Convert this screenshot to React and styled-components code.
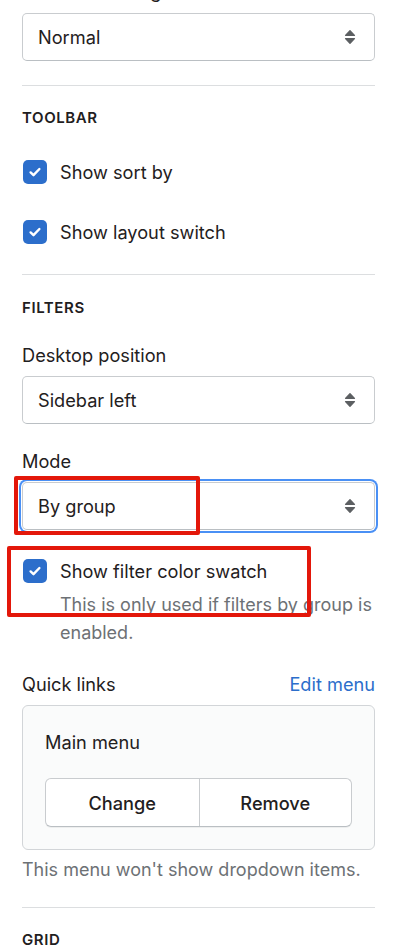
import React from "react";
import styled, { createGlobalStyle } from "styled-components";

const Global = createGlobalStyle`
  html, body { margin: 0; padding: 0; background: #ffffff; }
  body {
    font-family: Inter, "Noto Sans", "Liberation Sans", sans-serif;
    color: #1f2021;
    -webkit-font-smoothing: antialiased;
    overflow: hidden;
  }
`;

const Panel = styled.div`
  width: 400px;
  box-sizing: border-box;
  padding: 0 25px 0 22px;
  margin-top: -21px;
  display: flex;
  flex-direction: column;
`;

const Label = styled.div`
  font-size: 18.2px;
  line-height: 24px;
  height: 24px;
  margin-top: ${(p) => p.$mt || 0}px;
`;

const SelectBox = styled.div`
  box-sizing: border-box;
  height: 48px;
  margin-top: ${(p) => p.$mt || 0}px;
  border: 1px solid #c9cccf;
  border-bottom-color: #babfc3;
  border-radius: 5px;
  background: #fff;
  display: flex;
  align-items: center;
  justify-content: space-between;
  padding: 0 18px 0 15px;
  font-size: 18.2px;
  box-shadow: ${(p) =>
    p.$focused ? "0 0 0 1px #ffffff, 0 0 0 3px #4a90f5" : "none"};
`;

const Divider = styled.hr`
  border: 0;
  height: 1px;
  background: #dcdee0;
  margin: ${(p) => p.$mt || 0}px 0 0 0;
`;

const Heading = styled.div`
  font-size: 15px;
  line-height: 20px;
  height: 20px;
  font-weight: 600;
  letter-spacing: 0.6px;
  text-transform: uppercase;
  margin-top: ${(p) => p.$mt || 0}px;
`;

const CheckRow = styled.div`
  display: flex;
  align-items: center;
  gap: 13px;
  height: 24px;
  margin-top: ${(p) => p.$mt || 0}px;
  font-size: 18.2px;
  padding-left: 1px;
`;

const Box = styled.span`
  width: 24px;
  height: 24px;
  border-radius: 5px;
  background: #2c6ecb;
  display: flex;
  align-items: center;
  justify-content: center;
  flex: none;
`;

const Help = styled.div`
  font-size: 18px;
  line-height: 28px;
  color: #6d7175;
  padding-left: ${(p) => p.$indent || 0}px;
  margin-top: ${(p) => p.$mt || 0}px;
`;

const Anchor = styled.div`
  position: relative;
  margin-top: ${(p) => p.$mt || 0}px;
  display: flex;
  flex-direction: column;
`;

const Highlight = styled.div`
  position: absolute;
  box-sizing: border-box;
  border: 4px solid #e3170a;
  border-radius: 2px;
  pointer-events: none;
`;

const LabelRow = styled.div`
  display: flex;
  justify-content: space-between;
  align-items: center;
  height: 24px;
  font-size: 18.2px;
  margin-top: ${(p) => p.$mt || 0}px;
`;

const Link = styled.span`
  color: #2c6ecb;
`;

const Card = styled.div`
  box-sizing: border-box;
  margin-top: ${(p) => p.$mt || 0}px;
  border: 1px solid #d2d5d8;
  border-radius: 6px;
  background: #fafbfb;
  padding: 24px 22px 22px 22px;
  display: flex;
  flex-direction: column;
`;

const CardTitle = styled.div`
  font-size: 18.2px;
  line-height: 24px;
  height: 24px;
`;

const ButtonGroup = styled.div`
  margin-top: 24px;
  display: grid;
  grid-template-columns: 1fr 1fr;
  height: 49px;
  box-sizing: border-box;
  border: 1px solid #c9cccf;
  border-bottom-color: #babfc3;
  border-radius: 6px;
  background: #fff;
  overflow: hidden;
  box-shadow: 0 1px 0 rgba(0, 0, 0, 0.05);
`;

const Button = styled.div`
  display: flex;
  align-items: center;
  justify-content: center;
  font-size: 18.2px;
  font-weight: 500;
  & + & {
    border-left: 1px solid #c9cccf;
  }
`;

const Arrows = () => (
  <svg width="12" height="16" viewBox="0 0 12 16" fill="#5c5f62" stroke="#5c5f62" strokeWidth="1.2" strokeLinejoin="round">
    <path d="M1.5 6.3 L6 1.6 L10.5 6.3 Z" />
    <path d="M1.5 9.7 L6 14.4 L10.5 9.7 Z" />
  </svg>
);

const Select = ({ value, mt, focused }) => (
  <SelectBox $mt={mt} $focused={focused}>
    <span>{value}</span>
    <Arrows />
  </SelectBox>
);

const Checkbox = ({ label, mt }) => (
  <CheckRow $mt={mt}>
    <Box>
      <svg width="16" height="16" viewBox="0 0 16 16" fill="none">
        <path
          d="M3.6 8.4l2.9 2.8 5.9-6.2"
          stroke="#fff"
          strokeWidth="2.4"
          strokeLinecap="round"
          strokeLinejoin="round"
        />
      </svg>
    </Box>
    <span>{label}</span>
  </CheckRow>
);

export default function App() {
  return (
    <>
      <Global />
      <Panel>
        <Label>Card title casing</Label>
        <Select value="Normal" mt={10} />
        <Divider $mt={24} />

        <Heading $mt={22}>Toolbar</Heading>
        <Checkbox label="Show sort by" mt={32} />
        <Checkbox label="Show layout switch" mt={36} />
        <Divider $mt={30} />

        <Heading $mt={23}>Filters</Heading>
        <Label $mt={25}>Desktop position</Label>
        <Select value="Sidebar left" mt={9} />
        <Label $mt={25}>Mode</Label>
        <Anchor $mt={9}>
          <Select value="By group" focused />
          <Highlight style={{ left: -8, top: -6, width: 186, height: 59 }} />
        </Anchor>
        <Anchor $mt={29}>
          <Checkbox label="Show filter color swatch" />
          <Help $indent={38} $mt={8}>
            This is only used if filters by group is enabled.
          </Help>
          <Highlight style={{ left: -15, top: -13, width: 304, height: 71 }} />
        </Anchor>

        <LabelRow $mt={25}>
          <span>Quick links</span>
          <Link>Edit menu</Link>
        </LabelRow>
        <Card $mt={9}>
          <CardTitle>Main menu</CardTitle>
          <ButtonGroup>
            <Button>Change</Button>
            <Button>Remove</Button>
          </ButtonGroup>
        </Card>
        <Help $mt={6}>This menu won't show dropdown items.</Help>
        <Divider $mt={23} />
        <Heading $mt={22}>Grid</Heading>
      </Panel>
    </>
  );
}
